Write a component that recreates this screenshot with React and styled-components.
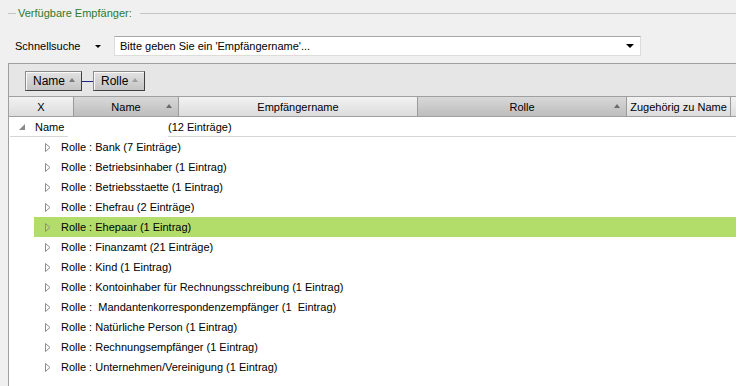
import styled, { createGlobalStyle } from "styled-components";

const GlobalStyle = createGlobalStyle`
  html, body {
    margin: 0;
    padding: 0;
    background: #f0f0f0;
    overflow: hidden;
  }
  body {
    font-family: "Liberation Sans", Arial, sans-serif;
    font-size: 11px;
    color: #000;
  }
`;

const Page = styled.div`
  width: 736px;
  height: 386px;
  display: flex;
  flex-direction: column;
  overflow: hidden;
`;

const Legend = styled.div`
  display: flex;
  align-items: center;
  height: 26px;
  padding-left: 8px;
  &::before,
  &::after {
    content: "";
    height: 1px;
    background: #c4c4c4;
  }
  &::before {
    width: 8px;
    margin-right: 2px;
  }
  &::after {
    flex: 1;
    margin-left: 8px;
  }
`;

const LegendText = styled.span`
  color: #2d7a2d;
  font-size: 11px;
`;

const SearchRow = styled.div`
  display: flex;
  align-items: center;
  height: 31px;
  padding: 4px 0 2px 15px;
`;

const SearchLabel = styled.span`
  width: 80px;
`;

const SmallArrow = styled.span`
  width: 0;
  height: 0;
  border-left: 3px solid transparent;
  border-right: 3px solid transparent;
  border-top: 3px solid #000;
  margin-top: 1px;
`;

const SearchBox = styled.div`
  margin-left: 13px;
  width: 527px;
  height: 20px;
  box-sizing: border-box;
  background: #fff;
  border: 1px solid #dcdcdc;
  border-top-color: #a8a8a8;
  display: flex;
  align-items: center;
  justify-content: space-between;
  padding: 0 6px 0 5px;
`;

const DropArrow = styled.span`
  width: 0;
  height: 0;
  border-left: 4px solid transparent;
  border-right: 4px solid transparent;
  border-top: 4px solid #000;
`;

const Grid = styled.div`
  flex: 1;
  margin-left: 8px;
  border-left: 1px solid #a0a0a0;
  border-top: 1px solid #a0a0a0;
  display: flex;
  flex-direction: column;
  background: #fff;
`;

const GroupBar = styled.div`
  height: 32px;
  background: #e6e6e6;
  display: flex;
  align-items: center;
  padding-left: 16px;
  padding-top: 1px;
  box-sizing: border-box;
`;

const GroupButton = styled.div`
  height: 20px;
  box-sizing: border-box;
  padding: 0 6px 0 7px;
  display: flex;
  align-items: center;
  gap: 4px;
  font-size: 12px;
  background: linear-gradient(#e2e2e2, #c4c4c4);
  border: 1px solid #8a8a8a;
  border-right-color: #404040;
  border-bottom-color: #404040;
  box-shadow: inset 1px 1px 0 #fafafa;
`;

const Connector = styled.div`
  width: 11px;
  height: 1px;
  background: #1a237e;
  margin-top: 2px;
`;

const SortUp = styled.span`
  width: 0;
  height: 0;
  border-left: 3px solid transparent;
  border-right: 3px solid transparent;
  border-bottom: 4px solid ${(p) => p.$color || "#7a7a7a"};
  margin-top: -1px;
`;

const HeaderRow = styled.div`
  display: flex;
  height: 21px;
  box-sizing: border-box;
  border-top: 1px solid #a0a0a0;
  border-bottom: 1px solid #a0a0a0;
`;

const HeaderCell = styled.div`
  width: ${(p) => p.$w}px;
  flex-shrink: 0;
  box-sizing: border-box;
  border-right: 1px solid #9a9a9a;
  display: flex;
  align-items: center;
  justify-content: center;
  position: relative;
  font-size: 11px;
  white-space: nowrap;
  background: ${(p) =>
    p.$sorted
      ? "linear-gradient(#d8d8d8, #bdbdbd)"
      : "linear-gradient(#f2f2f2, #dcdcdc)"};
  &:last-child {
    flex: 1;
    border-right: none;
  }
`;

const HeaderSort = styled.span`
  position: absolute;
  right: 6px;
  top: 7px;
  width: 0;
  height: 0;
  border-left: 3px solid transparent;
  border-right: 3px solid transparent;
  border-bottom: 4px solid #6a6a6a;
`;

const Body = styled.div`
  flex: 1;
  display: flex;
  flex-direction: column;
`;

const GroupRow = styled.div`
  height: 20px;
  display: flex;
  align-items: center;
  position: relative;
`;

const GroupLine = styled.div`
  position: absolute;
  bottom: 0;
  height: 1px;
  background: #d6d6d6;
  left: ${(p) => p.$l}px;
  width: ${(p) => p.$w}px;
`;

const Expanded = styled.span`
  width: 0;
  height: 0;
  margin: 0 10px 0 10px;
  border-left: 6px solid transparent;
  border-bottom: 6px solid #8a8a8a;
`;

const Row = styled.div`
  height: 20px;
  display: flex;
  align-items: center;
  margin-left: 25px;
  padding-left: 11px;
  background: ${(p) => (p.$selected ? "#b3dd6a" : "transparent")};
  white-space: pre;
`;

const Collapsed = styled.svg`
  width: 6px;
  height: 9px;
  margin-right: 10px;
  flex-shrink: 0;
`;

const rows = [
  "Rolle : Bank (7 Einträge)",
  "Rolle : Betriebsinhaber (1 Eintrag)",
  "Rolle : Betriebsstaette (1 Eintrag)",
  "Rolle : Ehefrau (2 Einträge)",
  "Rolle : Ehepaar (1 Eintrag)",
  "Rolle : Finanzamt (21 Einträge)",
  "Rolle : Kind (1 Eintrag)",
  "Rolle : Kontoinhaber für Rechnungsschreibung (1 Eintrag)",
  "Rolle :  Mandantenkorrespondenzempfänger (1  Eintrag)",
  "Rolle : Natürliche Person (1 Eintrag)",
  "Rolle : Rechnungsempfänger (1 Eintrag)",
  "Rolle : Unternehmen/Vereinigung (1 Eintrag)",
];

const columns = [
  { label: "X", w: 65 },
  { label: "Name", w: 105, sorted: true, sort: true },
  { label: "Empfängername", w: 239 },
  { label: "Rolle", w: 209, sorted: true, sort: true },
  { label: "Zugehörig zu Name", w: 104 },
  { label: "", w: 5 },
];

const App = () => {
  return (
    <Page>
      <GlobalStyle />
      <Legend>
        <LegendText>Verfügbare Empfänger:</LegendText>
      </Legend>
      <SearchRow>
        <SearchLabel>Schnellsuche</SearchLabel>
        <SmallArrow />
        <SearchBox>
          <span>Bitte geben Sie ein 'Empfängername'...</span>
          <DropArrow />
        </SearchBox>
      </SearchRow>
      <Grid>
        <GroupBar>
          <GroupButton>
            Name <SortUp />
          </GroupButton>
          <Connector />
          <GroupButton>
            Rolle <SortUp $color="#a0a0a0" />
          </GroupButton>
        </GroupBar>
        <HeaderRow>
          {columns.map((c, i) => (
            <HeaderCell key={i} $w={c.w} $sorted={c.sorted}>
              {c.label}
              {c.sort && <HeaderSort />}
            </HeaderCell>
          ))}
        </HeaderRow>
        <Body>
          <GroupRow>
            <Expanded />
            <span style={{ width: 133 }}>Name</span>
            <span>(12 Einträge)</span>
            <GroupLine $l={1} $w={58} />
            <GroupLine $l={159} $w={568} />
          </GroupRow>
          {rows.map((r, i) => (
            <Row key={i} $selected={i === 4}>
              <Collapsed viewBox="0 0 6 9">
                <path d="M0.5 0.5 L5 4.5 L0.5 8.5 Z" fill="none" stroke="#8c8c8c" />
              </Collapsed>
              {r}
            </Row>
          ))}
        </Body>
      </Grid>
    </Page>
  );
};

export default App;
